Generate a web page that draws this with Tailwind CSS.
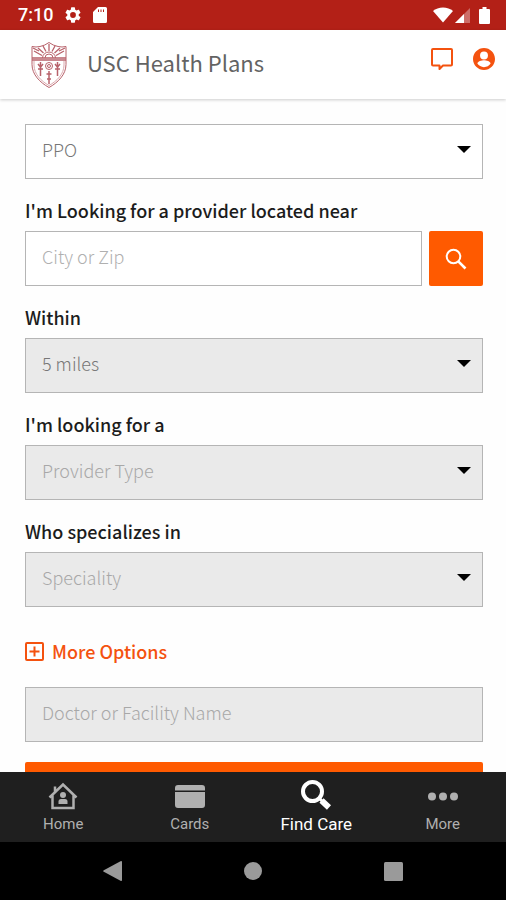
<!DOCTYPE html>
<html lang="en">
<head>
    <meta charset="UTF-8">
    <meta name="viewport" content="width=device-width, initial-scale=1.0">
    <title>USC Health Plans - Find Care</title>
    <script src="https://cdn.jsdelivr.net/npm/@tailwindcss/browser@4"></script>
</head>
<body class="h-screen flex flex-col bg-[#fefefe] font-['Noto_Sans_CJK_SC','Source_Sans_Pro',sans-serif]">
    <!-- Status bar -->
    <div class="h-[30px] shrink-0 flex items-center justify-between bg-[#b32017] pl-[18px] pr-4 text-white font-[Roboto,sans-serif]">
        <div class="flex items-center gap-3">
            <span class="text-lg font-medium">7:10</span>
            <svg class="size-4" viewBox="2 2 20 20" fill="currentColor"><path d="M19.14 12.94c.04-.3.06-.61.06-.94s-.02-.64-.07-.94l2.03-1.58a.49.49 0 0 0 .12-.61l-1.92-3.32a.49.49 0 0 0-.59-.22l-2.39.96a7 7 0 0 0-1.62-.94l-.36-2.54a.48.48 0 0 0-.48-.41h-3.84a.48.48 0 0 0-.47.41l-.36 2.54c-.59.24-1.13.57-1.62.94l-2.39-.96a.48.48 0 0 0-.59.22L2.74 8.87a.48.48 0 0 0 .12.61l2.03 1.58a7 7 0 0 0 0 1.88l-2.03 1.58a.49.49 0 0 0-.12.61l1.92 3.32c.12.22.37.29.59.22l2.39-.96c.5.38 1.03.7 1.62.94l.36 2.54c.05.24.24.41.48.41h3.84c.24 0 .44-.17.47-.41l.36-2.54a7 7 0 0 0 1.62-.94l2.39.96c.22.08.47 0 .59-.22l1.92-3.32a.48.48 0 0 0-.12-.61zM12 15.6a3.6 3.6 0 1 1 0-7.2 3.6 3.6 0 0 1 0 7.2z"/></svg>
            <svg class="w-[14px] h-4" viewBox="0 0 14 16" fill="currentColor"><path fill-rule="evenodd" d="M5 0h7.500a1.500 1.500 0 0 1 1.500 1.500v13a1.500 1.500 0 0 1-1.500 1.500h-11A1.500 1.500 0 0 1 0 14.500V5zM5 2.500v2.500h1V2.500zM7.500 2.500v2.500h1V2.500zM10 2.500v2.500h1V2.500z"/></svg>
        </div>
        <div class="flex items-center">
            <svg class="w-5 h-4" viewBox="0 0 20 16" fill="currentColor"><path d="M0 4C5-.8 15-.8 20 4L10 15.500z"/></svg>
            <svg class="w-4 h-4 ml-[2px]" viewBox="0 0 16 16"><path d="M0 16 15 1v15z" fill="#fff" fill-opacity=".35"/><path d="M0 16 9 7v9z" fill="#fff"/></svg>
            <svg class="w-[11px] h-[17px] ml-2" viewBox="0 0 11 17" fill="currentColor"><path d="M3.500 0h4v2H10a1 1 0 0 1 1 1v13a1 1 0 0 1-1 1H1a1 1 0 0 1-1-1V3a1 1 0 0 1 1-1h2.500z"/></svg>
        </div>
    </div>

    <!-- Header -->
    <header class="h-[69px] shrink-0 flex items-center justify-between bg-white pl-[31px] pr-[11px] shadow-[0_1px_3px_rgba(0,0,0,0.2)] z-10">
        <div class="flex items-center gap-5">
            <svg class="w-9 h-[46px]" viewBox="0 0 36 46" fill="none" stroke="#b8626b" stroke-width="1">
                <path d="M1 4.500q4 1 8 0 5-1 9-4 4 3 9 4 4 1 8 0v18c0 10-8 18-17 23C9 40.500 1 32.500 1 22.500z"/>
                <path d="M3 19v4c0 9 7 16 15 20.500C26 39 33 32 33 23v-4" stroke="#dba9ae"/>
                <path d="M1 16h34M1 18h34" stroke-width="1.500"/>
                <path d="M11.500 16a6.500 6 0 0 1 13 0M14 16a4 4 0 0 1 8 0"/>
                <path d="M18 9V2M15 9.500 12 4M21 9.500 24 4M12.500 11 7 6M23.500 11 29 6M11 13.500 3 9M25 13.500l8-4.500M2 6l6 3M34 6l-6 3" stroke-width="1.300"/>
                <path d="M9.500 20v14M18 29v13M26.500 20v14" stroke-width="1.500"/>
                <path d="M7 22l2.500 3 2.500-3M7 27h5M24 22l2.500 3 2.500-3M24 27h5M15.500 32h5M16 37h4" stroke-width="1.500"/>
                <circle cx="18" cy="24" r="3.500"/><circle cx="18" cy="24" r="1.500"/>
            </svg>
            <h1 class="pb-1 text-[22px] text-[#636363]">USC Health Plans</h1>
        </div>
        <div class="flex items-center gap-5 pb-3 text-[#f4520f]">
            <button type="button" aria-label="Messages">
                <svg class="block w-[22px] h-[22px]" viewBox="0 0 22 22" fill="none" stroke="currentColor" stroke-width="2" stroke-linejoin="round"><path d="M2 1h18a1 1 0 0 1 1 1v14.500a1 1 0 0 1-1 1h-8L8.500 21v-3.500H2a1 1 0 0 1-1-1V2a1 1 0 0 1 1-1z"/></svg>
            </button>
            <button type="button" aria-label="Account">
                <svg class="block w-[22px] h-[22px]" viewBox="2 2 20 20" fill="currentColor"><path d="M12 2C6.480 2 2 6.480 2 12s4.480 10 10 10 10-4.480 10-10S17.520 2 12 2zm0 3.200a3.600 3.600 0 1 1 0 7.200 3.600 3.600 0 0 1 0-7.200zm0 14.200c-2.500 0-4.710-1.280-6-3.220.03-1.990 4-3.080 6-3.080s5.970 1.090 6 3.080a7.200 7.200 0 0 1-6 3.220z"/></svg>
            </button>
        </div>
    </header>

    <!-- Search form -->
    <main class="flex-1 min-h-0 overflow-y-auto [scrollbar-width:none] pl-[25px] pr-[23px] pt-[25px]">
        <form class="flex flex-col">
            <div class="grid">
                <select aria-label="Plan" class="col-start-1 row-start-1 h-[55px] w-full appearance-none border border-[#b5b5b5] bg-white px-4 pb-[6px] text-lg font-light text-[#777]">
                    <option>PPO</option>
                </select>
                <svg class="col-start-1 row-start-1 self-center justify-self-end mr-3 mb-1 w-[14px] h-[7px] pointer-events-none" viewBox="0 0 14 7"><path d="M0 0h14L7 7z"/></svg>
            </div>

            <label for="near" class="mt-[19px] mb-[9px] text-lg/6 font-medium text-[#1c1c1c]">I'm Looking for a provider located near</label>
            <div class="flex gap-[7px]">
                <input id="near" type="text" placeholder="City or Zip" class="h-[55px] min-w-0 flex-1 border border-[#b5b5b5] bg-white px-4 pb-[6px] text-lg font-light placeholder:text-[#b0b0b0]">
                <button type="button" aria-label="Search" class="flex h-[55px] w-[54px] items-center justify-center rounded-xs bg-[#ff5a00] text-white">
                    <svg class="size-[22px]" viewBox="0 0 22 22" fill="none" stroke="currentColor" stroke-width="2"><circle cx="8.500" cy="8.500" r="6.800"/><path d="m13.300 13.300 7.200 7.200" stroke-width="2.600"/></svg>
                </button>
            </div>

            <label for="within" class="mt-[19px] mb-[9px] text-lg/6 font-medium text-[#1c1c1c]">Within</label>
            <div class="grid">
                <select id="within" class="col-start-1 row-start-1 h-[55px] w-full appearance-none border border-[#b5b5b5] bg-[#eaeaea] px-4 pb-[6px] text-lg font-light text-[#777]">
                    <option>5 miles</option>
                </select>
                <svg class="col-start-1 row-start-1 self-center justify-self-end mr-3 mb-1 w-[14px] h-[7px] pointer-events-none" viewBox="0 0 14 7"><path d="M0 0h14L7 7z"/></svg>
            </div>

            <label for="type" class="mt-[19px] mb-[9px] text-lg/6 font-medium text-[#1c1c1c]">I'm looking for a</label>
            <div class="grid">
                <select id="type" class="col-start-1 row-start-1 h-[55px] w-full appearance-none border border-[#b5b5b5] bg-[#eaeaea] px-4 pb-[6px] text-lg font-light text-[#a8a8a8]">
                    <option>Provider Type</option>
                </select>
                <svg class="col-start-1 row-start-1 self-center justify-self-end mr-3 mb-1 w-[14px] h-[7px] pointer-events-none" viewBox="0 0 14 7"><path d="M0 0h14L7 7z"/></svg>
            </div>

            <label for="speciality" class="mt-[19px] mb-[9px] text-lg/6 font-medium text-[#1c1c1c]">Who specializes in</label>
            <div class="grid">
                <select id="speciality" class="col-start-1 row-start-1 h-[55px] w-full appearance-none border border-[#b5b5b5] bg-[#eaeaea] px-4 pb-[6px] text-lg font-light text-[#a8a8a8]">
                    <option>Speciality</option>
                </select>
                <svg class="col-start-1 row-start-1 self-center justify-self-end mr-3 mb-1 w-[14px] h-[7px] pointer-events-none" viewBox="0 0 14 7"><path d="M0 0h14L7 7z"/></svg>
            </div>

            <button type="button" class="mt-8 mb-6 flex items-center gap-2 self-start text-lg/6 font-medium text-[#f4520f]">
                <svg class="size-[19px]" viewBox="0 0 19 19" fill="none" stroke="currentColor" stroke-width="2"><rect x="1" y="1" width="17" height="17" rx="1"/><path d="M9.500 4.500v10M4.500 9.500h10"/></svg>
                More Options
            </button>

            <input type="text" aria-label="Doctor or Facility Name" placeholder="Doctor or Facility Name" class="h-[55px] w-full border border-[#b5b5b5] bg-[#eaeaea] px-4 pb-[6px] text-lg font-light placeholder:text-[#a8a8a8]">
            <button type="submit" aria-label="Search providers" class="mt-5 mb-6 h-[55px] rounded-xs bg-[#ff5a00]"></button>
        </form>
    </main>

    <!-- Bottom tabs -->
    <nav class="h-[70px] shrink-0 grid grid-cols-4 bg-[#1f1f1f] text-[#b0b0b0] font-[Roboto,sans-serif]">
        <a href="#home" class="flex flex-col items-center justify-end gap-1 pb-2 text-[15px]/5">
            <svg class="w-[30px] h-7" viewBox="0 0 30 28" fill="none" stroke="currentColor" stroke-width="2.500"><path d="M1.500 15.500 15 2.500l13.500 13M4.500 13.500V26h21V13.500M7 10V4.500"/><g fill="currentColor" stroke="none"><circle cx="15" cy="13" r="3"/><path d="M10.500 22v-2.500q0-2.500 2.500-2.500h4q2.500 0 2.500 2.500V22z"/></g></svg>
            Home
        </a>
        <a href="#cards" class="flex flex-col items-center justify-end gap-1 pb-2 text-[15px]/5">
            <svg class="w-[30px] h-7" viewBox="0 0 30 28" fill="currentColor"><path d="M0 8.500V6a3 3 0 0 1 3-3h24a3 3 0 0 1 3 3v2.500zM0 10h30V23a3 3 0 0 1-3 3H3a3 3 0 0 1-3-3z"/></svg>
            Cards
        </a>
        <a href="#find-care" class="flex flex-col items-center justify-end gap-1 pb-2 text-[17px]/5 text-white">
            <svg class="w-[30px] h-[30px]" viewBox="0 0 30 30" fill="none" stroke="currentColor"><circle cx="11.500" cy="11.500" r="9.500" stroke-width="4"/><path d="m18 18 3 3" stroke-width="3"/><path d="m20.500 20.500 7.500 7" stroke-width="6"/></svg>
            Find Care
        </a>
        <a href="#more" class="flex flex-col items-center justify-end gap-1 pb-2 text-[15px]/5">
            <svg class="w-[30px] h-7" viewBox="0 0 30 28" fill="currentColor"><circle cx="4" cy="14.500" r="4"/><circle cx="15" cy="14.500" r="4"/><circle cx="26" cy="14.500" r="4"/></svg>
            More
        </a>
    </nav>

    <!-- System navigation -->
    <div class="h-[58px] shrink-0 flex items-center justify-between bg-black px-[103px] text-[#9a9a9a]">
        <button type="button" aria-label="Back"><svg class="block w-[19px] h-5" viewBox="0 0 19 20" fill="currentColor"><path d="M17.500.2Q19-.4 19 1v18q0 1.400-1.500.8L.8 10.800q-1.300-.8 0-1.600z"/></svg></button>
        <button type="button" aria-label="Home screen"><svg class="block size-[18px]" viewBox="0 0 18 18" fill="currentColor"><circle cx="9" cy="9" r="9"/></svg></button>
        <button type="button" aria-label="Recent apps"><svg class="block size-[19px]" viewBox="0 0 19 19" fill="currentColor"><rect width="19" height="19" rx="1.500"/></svg></button>
    </div>
</body>
</html>
